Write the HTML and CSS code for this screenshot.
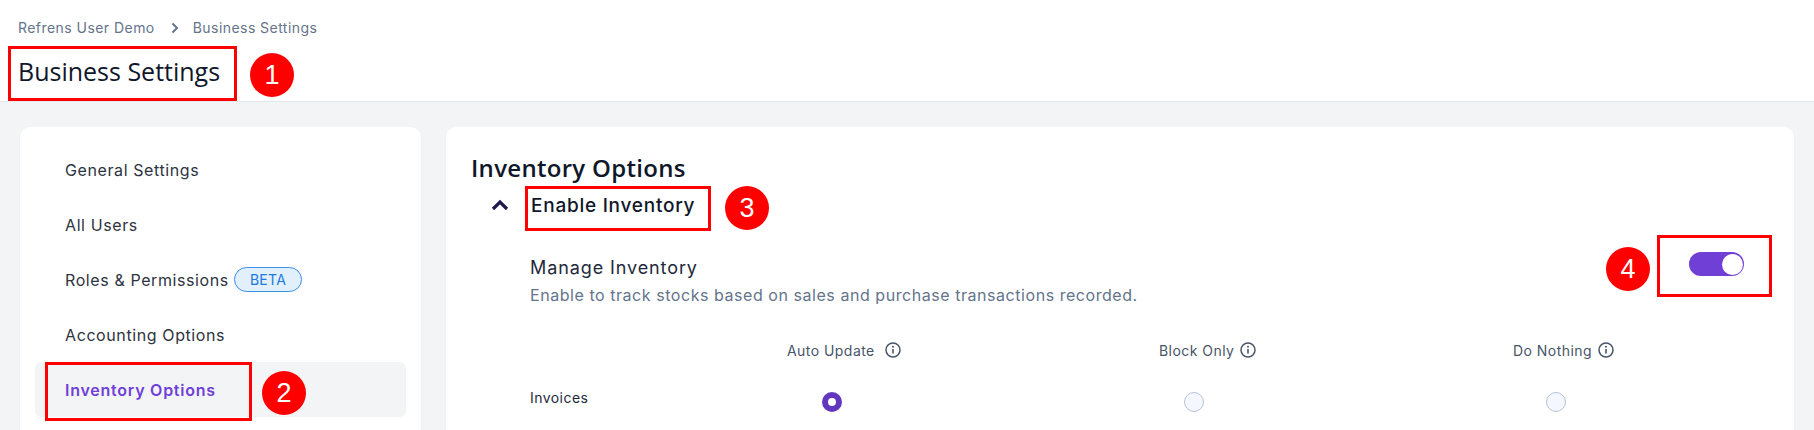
FILE: index.html
```html
<!DOCTYPE html>
<html lang="en">
<head>
    <meta charset="UTF-8">
    <title>Business Settings</title>
    <link rel="stylesheet" href="styles.css">
</head>
<body>
    <div class="page-header">
        <div class="breadcrumb">
            <span>Refrens User Demo</span>
            <svg class="crumb-arrow" width="10" height="12" viewBox="0 0 10 12"><path d="M2.5 1.5L7 6l-4.500 4.500" fill="none" stroke="#64748b" stroke-width="2"/></svg>
            <span>Business Settings</span>
        </div>
        <h1>Business Settings</h1>
    </div>

    <div class="main">
        <div class="sidebar">
            <a class="nav-item">General Settings</a>
            <a class="nav-item">All Users</a>
            <a class="nav-item">Roles &amp; Permissions <span class="beta">BETA</span></a>
            <a class="nav-item">Accounting Options</a>
            <a class="nav-item active">Inventory Options</a>
        </div>

        <div class="content">
            <h2>Inventory Options</h2>
            <div class="section-title">
                <svg class="chevron" width="18" height="12" viewBox="0 0 18 12"><path d="M2 10l7-7 7 7" fill="none" stroke="#1e1b4b" stroke-width="3.200"/></svg>
                <h3>Enable Inventory</h3>
            </div>
            <div class="section-body">
                <div class="setting-row">
                    <div>
                        <div class="setting-name">Manage Inventory</div>
                        <div class="setting-desc">Enable to track stocks based on sales and purchase transactions recorded.</div>
                    </div>
                    <div class="toggle"><span class="knob"></span></div>
                </div>

                <div class="options-grid">
                    <div></div>
                    <div class="opt-head head-auto">Auto Update
                        <svg class="info" viewBox="0 0 16 16"><circle cx="8" cy="8" r="7" fill="none" stroke="#475569" stroke-width="1.500"/><path d="M8 7v4.500" stroke="#475569" stroke-width="1.600"/><circle cx="8" cy="4.700" r="1" fill="#475569"/></svg>
                    </div>
                    <div class="opt-head head-block">Block Only
                        <svg class="info" viewBox="0 0 16 16"><circle cx="8" cy="8" r="7" fill="none" stroke="#475569" stroke-width="1.500"/><path d="M8 7v4.500" stroke="#475569" stroke-width="1.600"/><circle cx="8" cy="4.700" r="1" fill="#475569"/></svg>
                    </div>
                    <div class="opt-head head-nothing">Do Nothing
                        <svg class="info" viewBox="0 0 16 16"><circle cx="8" cy="8" r="7" fill="none" stroke="#475569" stroke-width="1.500"/><path d="M8 7v4.500" stroke="#475569" stroke-width="1.600"/><circle cx="8" cy="4.700" r="1" fill="#475569"/></svg>
                    </div>

                    <div class="row-label">Invoices</div>
                    <div class="radio-cell"><span class="radio checked"></span></div>
                    <div class="radio-cell"><span class="radio"></span></div>
                    <div class="radio-cell"><span class="radio"></span></div>
                </div>
            </div>
        </div>
    </div>

    <!-- annotations on top of the screenshot -->
    <div class="mark-box box-1"></div>
    <div class="mark-num num-1">1</div>
    <div class="mark-box box-2"></div>
    <div class="mark-num num-2">2</div>
    <div class="mark-box box-3"></div>
    <div class="mark-num num-3">3</div>
    <div class="mark-box box-4"></div>
    <div class="mark-num num-4">4</div>
</body>
</html>
```

FILE: styles.css
```css
:root {
    --purple: #6f3fd6;
    --text-dark: #1e293b;
    --text-grey: #64748b;
    --page-bg: #f3f4f6;
    --mark-red: #ff0000;
}

* {
    box-sizing: border-box;
    margin: 0;
    padding: 0;
}

html, body {
    height: 430px;
    overflow: hidden;
}

body {
    position: relative;
    font-family: 'Inter', sans-serif;
    background-color: var(--page-bg);
    display: flex;
    flex-direction: column;
}

.page-header {
    height: 102px;
    background-color: #fff;
    border-bottom: 1px solid #e5e7eb;
    padding: 18px 18px 0;
}

.breadcrumb {
    display: flex;
    align-items: center;
    font-size: 14px;
    letter-spacing: 0.45px;
    line-height: 20px;
    color: var(--text-grey);
}

.crumb-arrow {
    margin: 0 13px 0 15px;
}

h1 {
    font-family: 'Open Sans', sans-serif;
    font-size: 25px;
    font-weight: 400;
    line-height: 36px;
    color: #0f172a;
    margin-top: 15px;
}

.main {
    flex: 1;
    display: flex;
    gap: 25px;
    padding: 25px 20px 0;
    min-height: 0;
}

.sidebar {
    width: 401px;
    flex-shrink: 0;
    height: 400px;
    background-color: #fff;
    border-radius: 10px;
    padding: 15px 15px;
    box-shadow: 0 1px 2px rgba(0, 0, 0, 0.04);
}

.nav-item {
    display: flex;
    align-items: center;
    height: 55px;
    padding-left: 30px;
    font-size: 16px;
    letter-spacing: 0.6px;
    color: #2d3340;
    border-radius: 6px;
}

.nav-item.active {
    background-color: var(--page-bg);
    color: var(--purple);
    font-weight: 600;
    letter-spacing: 0.75px;
}

.beta {
    display: inline-block;
    margin-left: 5px;
    height: 25px;
    line-height: 23px;
    padding: 0 15px;
    border: 1px solid #3b8fe8;
    border-radius: 13px;
    background-color: #e2effc;
    color: #1a7ae0;
    font-size: 14px;
    letter-spacing: 0.3px;
}

.content {
    flex: 1;
    height: 400px;
    background-color: #fff;
    border-radius: 10px;
    padding: 26px 25px;
    box-shadow: 0 1px 2px rgba(0, 0, 0, 0.04);
}

h2 {
    font-family: 'Open Sans', sans-serif;
    font-size: 24px;
    font-weight: 600;
    letter-spacing: 0.3px;
    line-height: 30px;
    color: #0f172a;
}

.section-title {
    display: flex;
    align-items: center;
    height: 28px;
    margin-top: 8px;
}

.chevron {
    margin-left: 20px;
    margin-right: 22px;
}

h3 {
    font-size: 19px;
    font-weight: 500;
    letter-spacing: 0.75px;
    color: #0f172a;
}

.section-body {
    padding-left: 59px;
}

.setting-row {
    display: flex;
    justify-content: space-between;
    align-items: flex-start;
    padding: 34px 25px 0 0;
}

.setting-name {
    font-size: 18px;
    letter-spacing: 0.9px;
    line-height: 30px;
    color: #1e293b;
}

.setting-desc {
    font-size: 16px;
    letter-spacing: 0.55px;
    line-height: 24px;
    color: var(--text-grey);
}

.toggle {
    width: 55px;
    height: 24px;
    border-radius: 12px;
    background-color: var(--purple);
    display: flex;
    align-items: center;
    justify-content: flex-end;
    padding-right: 1px;
    margin-top: -1px;
}

.knob {
    width: 21px;
    height: 21px;
    border-radius: 50%;
    background-color: #fff;
}

.options-grid {
    display: grid;
    grid-template-columns: 121px 362px 362px 362px;
    margin-top: 30px;
}

.opt-head {
    display: flex;
    align-items: center;
    height: 26px;
    font-size: 14px;
    letter-spacing: 0.45px;
    color: #475569;
}

.head-auto { padding-left: 136px; }
.head-block { padding-left: 146px; }
.head-nothing { padding-left: 138px; }

.info {
    width: 16px;
    height: 16px;
    margin-left: 6px;
}

.head-auto .info { margin-left: 10px; }

.row-label {
    font-size: 14px;
    letter-spacing: 0.45px;
    color: #1e293b;
    padding-top: 26px;
}

.radio-cell {
    display: flex;
    justify-content: center;
    padding-top: 29px;
}

.radio {
    width: 20px;
    height: 20px;
    border-radius: 50%;
    border: 1px solid #b6c2d9;
    background-color: #f4f7fd;
}

.radio.checked {
    border: 6px solid #6237c0;
    background-color: #fff;
}

/* red annotations */
.mark-box {
    position: absolute;
    border: 3px solid var(--mark-red);
}

.mark-num {
    position: absolute;
    width: 44px;
    height: 44px;
    border-radius: 50%;
    background-color: var(--mark-red);
    color: #fff;
    font-family: 'Liberation Sans', sans-serif;
    font-size: 27px;
    line-height: 44px;
    text-align: center;
}

.box-1 { left: 8px; top: 46px; width: 229px; height: 55px; }
.num-1 { left: 250px; top: 53px; }
.box-2 { left: 45px; top: 362px; width: 207px; height: 59px; }
.num-2 { left: 262px; top: 371px; }
.box-3 { left: 525px; top: 186px; width: 186px; height: 45px; }
.num-3 { left: 725px; top: 186px; }
.box-4 { left: 1657px; top: 235px; width: 115px; height: 62px; }
.num-4 { left: 1606px; top: 247px; }
```
